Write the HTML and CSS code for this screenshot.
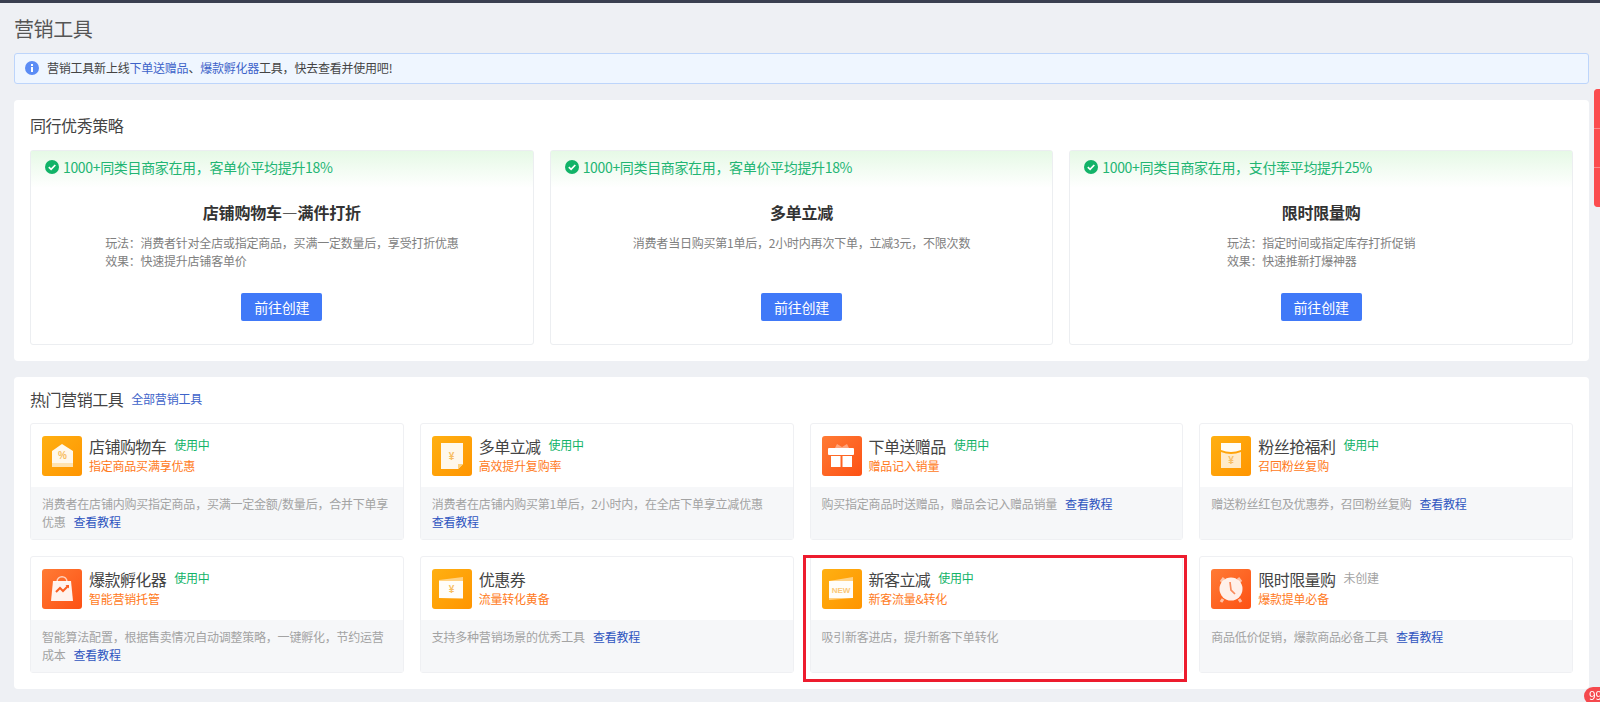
FILE: index.html
```html
<!DOCTYPE html>
<html lang="zh-CN">
<head>
<meta charset="utf-8">
<title>营销工具</title>
<link rel="stylesheet" href="styles.css">
</head>
<body>
<div class="topbar"></div>
<main class="page">
  <h1 class="page-title">营销工具</h1>
  <div class="alert">
    <svg class="alert-icon" viewBox="0 0 14 14"><circle cx="7" cy="7" r="7" fill="#5b8cf5"/><rect x="6" y="6" width="2" height="5" fill="#fff"/><rect x="6" y="3" width="2" height="2" fill="#fff"/></svg>
    <span>营销工具新上线<a class="alert-link">下单送赠品</a>、<a class="alert-link">爆款孵化器</a>工具，快去查看并使用吧!</span>
  </div>

  <section class="panel">
    <h2 class="panel-title">同行优秀策略</h2>
    <div class="strategy-grid">
      <article class="strategy">
        <div class="strategy-head"><svg class="check" viewBox="0 0 14 14"><circle cx="7" cy="7" r="7" fill="#12b368"/><path d="M3.8 7.2 6.1 9.4 10.3 5" fill="none" stroke="#fff" stroke-width="1.7"/></svg>1000+同类目商家在用，客单价平均提升18%</div>
        <h3 class="strategy-name">店铺购物车—满件打折</h3>
        <div class="strategy-desc"><p>玩法：消费者针对全店或指定商品，买满一定数量后，享受打折优惠</p><p>效果：快速提升店铺客单价</p></div>
        <a class="create-btn">前往创建</a>
      </article>
      <article class="strategy">
        <div class="strategy-head"><svg class="check" viewBox="0 0 14 14"><circle cx="7" cy="7" r="7" fill="#12b368"/><path d="M3.8 7.2 6.1 9.4 10.3 5" fill="none" stroke="#fff" stroke-width="1.7"/></svg>1000+同类目商家在用，客单价平均提升18%</div>
        <h3 class="strategy-name">多单立减</h3>
        <div class="strategy-desc"><p>消费者当日购买第1单后，2小时内再次下单，立减3元，不限次数</p></div>
        <a class="create-btn">前往创建</a>
      </article>
      <article class="strategy">
        <div class="strategy-head"><svg class="check" viewBox="0 0 14 14"><circle cx="7" cy="7" r="7" fill="#12b368"/><path d="M3.8 7.2 6.1 9.4 10.3 5" fill="none" stroke="#fff" stroke-width="1.7"/></svg>1000+同类目商家在用，支付率平均提升25%</div>
        <h3 class="strategy-name">限时限量购</h3>
        <div class="strategy-desc"><p>玩法：指定时间或指定库存打折促销</p><p>效果：快速推新打爆神器</p></div>
        <a class="create-btn">前往创建</a>
      </article>
    </div>
  </section>

  <section class="panel panel-tools">
    <h2 class="panel-title panel-title-row">热门营销工具<a class="all-link">全部营销工具</a></h2>
    <div class="tool-grid">
      <article class="tool">
        <div class="tool-head">
          <div class="tool-icon amber"><svg viewBox="0 0 40 40"><path d="M10 15 20 8 31 15V31H10Z" fill="#fff" opacity=".92"/><path d="M10 27H31V31H10Z" fill="#ffe3b0"/><text x="20.500" y="23" class="glyph">%</text></svg></div>
          <div><div class="tool-line"><span class="tool-name">店铺购物车</span><span class="state">使用中</span></div><div class="tool-sub">指定商品买满享优惠</div></div>
        </div>
        <div class="tool-body">消费者在店铺内购买指定商品，买满一定金额/数量后，合并下单享优惠<a class="doc-link">查看教程</a></div>
      </article>
      <article class="tool">
        <div class="tool-head">
          <div class="tool-icon amber"><svg viewBox="0 0 40 40"><path d="M9 7H31V28L26 33H9Z" fill="#fff" opacity=".92"/><path d="M26 33V28H31Z" fill="#ffd27a"/><text x="19.500" y="24" class="glyph">¥</text></svg></div>
          <div><div class="tool-line"><span class="tool-name">多单立减</span><span class="state">使用中</span></div><div class="tool-sub">高效提升复购率</div></div>
        </div>
        <div class="tool-body">消费者在店铺内购买第1单后，2小时内，在全店下单享立减优惠<a class="doc-link doc-first">查看教程</a></div>
      </article>
      <article class="tool">
        <div class="tool-head">
          <div class="tool-icon flame"><svg viewBox="0 0 40 40"><path d="M13 12 15 8 20 11 25 8 27 12Z" fill="#fff" opacity=".4"/><rect x="6" y="12" width="26" height="7" rx="1" fill="#fff"/><rect x="9" y="20" width="9.500" height="11" fill="#fff"/><rect x="20.500" y="20" width="9.500" height="11" fill="#fff"/></svg></div>
          <div><div class="tool-line"><span class="tool-name">下单送赠品</span><span class="state">使用中</span></div><div class="tool-sub">赠品记入销量</div></div>
        </div>
        <div class="tool-body">购买指定商品时送赠品，赠品会记入赠品销量<a class="doc-link">查看教程</a></div>
      </article>
      <article class="tool">
        <div class="tool-head">
          <div class="tool-icon amber"><svg viewBox="0 0 40 40"><path d="M10 7H30V14Q20 18 10 14Z" fill="#fff" opacity=".96"/><path d="M10 16Q20 20 30 16V32H10Z" fill="#fff" opacity=".78"/><text x="20" y="28" class="glyph">¥</text></svg></div>
          <div><div class="tool-line"><span class="tool-name">粉丝抢福利</span><span class="state">使用中</span></div><div class="tool-sub">召回粉丝复购</div></div>
        </div>
        <div class="tool-body">赠送粉丝红包及优惠券，召回粉丝复购<a class="doc-link">查看教程</a></div>
      </article>
      <article class="tool">
        <div class="tool-head">
          <div class="tool-icon flame"><svg viewBox="0 0 40 40"><path d="M15 13C15 6 25 6 25 13" fill="none" stroke="#fff" stroke-width="1.500" opacity=".7"/><path d="M11 12H29L31 32H9Z" fill="#fff" opacity=".92"/><path d="M14 23 18 19 21 22 26 17" fill="none" stroke="#fb5f22" stroke-width="2"/><path d="M23.500 16H27V19.500Z" fill="#fb5f22"/></svg></div>
          <div><div class="tool-line"><span class="tool-name">爆款孵化器</span><span class="state">使用中</span></div><div class="tool-sub">智能营销托管</div></div>
        </div>
        <div class="tool-body">智能算法配置，根据售卖情况自动调整策略，一键孵化，节约运营成本<a class="doc-link">查看教程</a></div>
      </article>
      <article class="tool">
        <div class="tool-head">
          <div class="tool-icon amber"><svg viewBox="0 0 40 40"><path d="M7 11 31 8V30L7 29Z" fill="#fff" opacity=".5"/><rect x="7" y="12" width="24" height="17" fill="#fff" opacity=".95"/><text x="19.500" y="24" class="glyph">¥</text></svg></div>
          <div><div class="tool-line"><span class="tool-name">优惠券</span></div><div class="tool-sub">流量转化黄备</div></div>
        </div>
        <div class="tool-body">支持多种营销场景的优秀工具<a class="doc-link">查看教程</a></div>
      </article>
      <article class="tool tool-marked">
        <div class="tool-head">
          <div class="tool-icon amber"><svg viewBox="0 0 40 40"><path d="M7 12 31 8V29L7 31Z" fill="#fff" opacity=".5"/><rect x="7" y="12" width="24" height="17" fill="#fff" opacity=".95"/><text x="19" y="23.500" class="glyph glyph-new">NEW</text></svg></div>
          <div><div class="tool-line"><span class="tool-name">新客立减</span><span class="state">使用中</span></div><div class="tool-sub">新客流量&amp;转化</div></div>
        </div>
        <div class="tool-body">吸引新客进店，提升新客下单转化</div>
      </article>
      <article class="tool">
        <div class="tool-head">
          <div class="tool-icon flame"><svg viewBox="0 0 40 40"><path d="M10 13 13 9M30 13 27 9M12 30 10 33M28 30 30 33" stroke="#fff" stroke-width="3" opacity=".6"/><circle cx="20" cy="20" r="11.500" fill="#fff" opacity=".9"/><path d="M19 13 20 21 24 25" fill="none" stroke="#f98a5c" stroke-width="1.700"/></svg></div>
          <div><div class="tool-line"><span class="tool-name">限时限量购</span><span class="state state-off">未创建</span></div><div class="tool-sub">爆款提单必备</div></div>
        </div>
        <div class="tool-body">商品低价促销，爆款商品必备工具<a class="doc-link">查看教程</a></div>
      </article>
    </div>
  </section>
</main>
<div class="side-tab"><span></span><span></span><span></span></div>
<div class="msg-badge">99+</div>
</body>
</html>
```
FILE: styles.css
```css
*, *::after { box-sizing: border-box; }
html, body { margin: 0; height: 702px; overflow: hidden; }
body {
  background: #eef0f4;
  color: #333;
  font-family: "Noto Sans CJK SC", "Liberation Sans", sans-serif;
  font-size: 12px;
  letter-spacing: -0.22px;
}
h1, h2, h3, p { margin: 0; font-weight: 400; }
a { cursor: pointer; }

.topbar { height: 3px; background: #3a3f50; }
.page { padding: 0 11px 0 14px; }
.page-title { height: 50px; padding-top: 12px; font-size: 20px; line-height: 28px; letter-spacing: -0.4px; color: #555; }

.alert {
  display: flex;
  align-items: center;
  gap: 8px;
  height: 31px;
  margin-bottom: 16px;
  padding: 0 0 1px 10px;
  background: #eff6ff;
  border: 1px solid #bdd5fb;
  border-radius: 3px;
  line-height: 18px;
  color: #444;
}
.alert-icon { width: 14px; height: 14px; flex: none; }
.alert-link { color: #3d63c9; }

.panel { margin-bottom: 16px; padding: 13px 16px 16px; background: #fff; border-radius: 4px; }
.panel-title { margin-bottom: 13px; font-size: 16px; line-height: 24px; letter-spacing: -0.45px; color: #444; }
.panel-tools { padding: 10px 16px 16px; }
.panel-title-row { display: flex; align-items: center; gap: 8px; margin-bottom: 12px; }
.all-link { font-size: 12px; letter-spacing: -0.22px; color: #3d63c9; }

.strategy-grid { display: grid; grid-template-columns: repeat(3, 1fr); gap: 16px; }
.strategy {
  display: flex;
  flex-direction: column;
  align-items: center;
  height: 195px;
  border: 1px solid #eceef1;
  border-radius: 3px;
}
.strategy-head {
  display: flex;
  align-items: center;
  align-self: stretch;
  gap: 4px;
  height: 37px;
  padding: 0 0 5px 14px;
  background: linear-gradient(#e6f9e6, #fff);
  font-size: 14px;
  letter-spacing: -0.34px;
  color: #22b573;
}
.check { width: 14px; height: 14px; flex: none; }
.strategy-name { margin-top: 12px; font-size: 16px; line-height: 24px; font-weight: 700; letter-spacing: -0.2px; color: #333; }
.strategy-desc { height: 36px; margin-top: 10px; line-height: 18px; color: #808080; }
.create-btn {
  display: flex;
  align-items: center;
  justify-content: center;
  width: 81px;
  height: 28px;
  margin-top: 23px;
  background: #4079f8;
  border-radius: 2px;
  font-size: 14px;
  color: #fff;
}

.tool-grid { display: grid; grid-template-columns: repeat(4, 1fr); gap: 16px; }
.tool {
  display: flex;
  flex-direction: column;
  height: 117px;
  border: 1px solid #eff0f3;
  border-radius: 3px;
}
.tool-head { display: flex; gap: 7px; height: 63px; padding: 12px 11px 0; }
.tool-icon { width: 40px; height: 40px; flex: none; border-radius: 3px; }
.tool-icon svg { display: block; width: 40px; height: 40px; }
.amber { background: linear-gradient(135deg, #ffb012, #ff9500); }
.flame { background: linear-gradient(135deg, #ff7b35, #fd5114); }
.glyph { font-family: "Liberation Sans", sans-serif; font-size: 10px; font-weight: 700; letter-spacing: 0; text-anchor: middle; fill: #f7bd62; }
.glyph-new { font-size: 8px; fill: #fbc878; }
.tool-line { display: flex; align-items: center; gap: 8px; height: 22px; margin-top: -1px; }
.tool-name { font-size: 16px; line-height: 22px; letter-spacing: -0.55px; color: #444; }
.state { position: relative; top: -2px; color: #12b368; }
.state-off { color: #a3a3a3; }
.tool-sub { line-height: 18px; color: #ff7a22; }
.tool-body { flex: 1; padding: 8px 11px 0; background: #f6f7f9; line-height: 18px; color: #a3a3a3; }
.doc-link { display: inline-block; margin-left: 8px; white-space: nowrap; color: #2f55c0; }
.doc-first { margin-left: 0; }

.tool-marked { position: relative; }
.tool-marked::after {
  content: "";
  position: absolute;
  top: -2px;
  left: -8px;
  width: 384px;
  height: 127px;
  border: 3px solid #ed1c2e;
  pointer-events: none;
}

.side-tab {
  position: fixed;
  top: 89px;
  right: 0;
  display: flex;
  flex-direction: column;
  gap: 1px;
  width: 6px;
  height: 118px;
  border-radius: 4px 0 0 4px;
  overflow: hidden;
  background: #fb8a8a;
}
.side-tab span { flex: 1; background: #fb4d4f; }
.msg-badge {
  position: fixed;
  top: 687px;
  left: 1584px;
  width: 30px;
  height: 18px;
  padding-left: 5px;
  background: #f5494d;
  border-radius: 9px;
  font-size: 12px;
  line-height: 16px;
  color: #fff;
}
```
